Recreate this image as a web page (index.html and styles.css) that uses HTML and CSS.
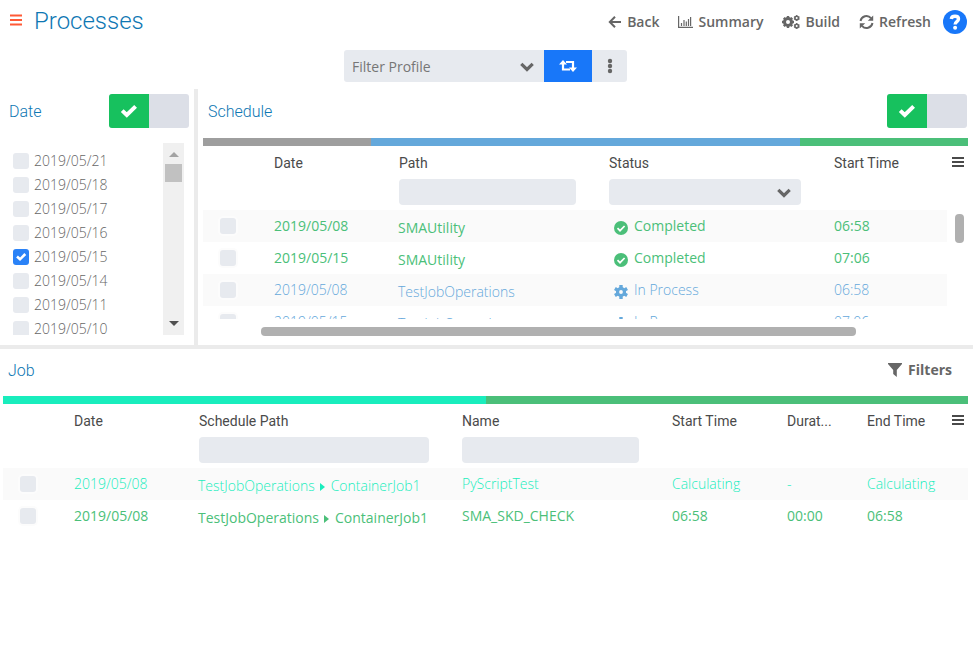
FILE: index.html
```html
<!DOCTYPE html>
<html lang="en">
<head>
<meta charset="utf-8">
<title>Processes</title>
<link rel="stylesheet" href="styles.css">
</head>
<body>
<svg class="sprite" aria-hidden="true">
  <symbol id="check" viewBox="0 0 18 14"><path d="M2.2 6.6 6.8 11 15.6 2.4" fill="none" stroke="currentColor" stroke-width="4"/></symbol>
  <symbol id="bars" viewBox="0 0 12 12"><path d="M0 2h12M0 6h12M0 10h12" stroke="currentColor" stroke-width="2"/></symbol>
  <symbol id="chevron" viewBox="0 0 14 10"><path d="M1.3 1.8 7 7.4l5.7-5.6" fill="none" stroke="currentColor" stroke-width="3.2"/></symbol>
  <symbol id="done" viewBox="0 0 14 14"><circle cx="7" cy="7" r="7" fill="currentColor"/><path d="M3.5 7.2 6 9.7l4.6-4.7" fill="none" stroke="#fff" stroke-width="1.7"/></symbol>
  <symbol id="gear" viewBox="0 0 14 14"><g stroke="currentColor" fill="none"><circle cx="7" cy="7" r="3.5" stroke-width="3.2"/><path d="M7 0v3M7 11v3M.9 3.5l2.7 1.6M10.4 8.9l2.7 1.6M.9 10.5l2.7-1.6M10.4 5.1l2.7-1.6" stroke-width="3.4"/></g></symbol>
</svg>

<header class="top">
  <div class="title-row">
    <button class="icon-btn nav" aria-label="Menu"><svg class="i12" viewBox="0 0 12 12"><path d="M0 1.500h12M0 6h12M0 10.500h12" stroke="currentColor" stroke-width="1.800"/></svg></button>
    <h1>Processes</h1>
    <nav class="actions">
      <a href="#back"><svg class="i14" viewBox="0 0 14 14"><path d="M13 7H2.5M7 1.8 1.8 7 7 12.2" fill="none" stroke="currentColor" stroke-width="2"/></svg>Back</a>
      <a href="#summary"><svg class="i15" viewBox="0 0 15 14"><path d="M.6 1v11.4H15" fill="none" stroke="currentColor" stroke-width="1.2"/><path d="M3.5 8v3M6 5v6M8.3 6.5V11M10.5 4v7M12.6 2v9" stroke="currentColor" stroke-width="1.2"/></svg>Summary</a>
      <a href="#build"><svg class="i18" viewBox="0 0 18 14"><g stroke="currentColor" fill="none"><circle cx="6" cy="7" r="3.5" stroke-width="3"/><path d="M6 1v2.4M6 10.6V13M0 7h2.4M9.6 7H12M1.8 2.8l1.6 1.6M8.6 9.6l1.6 1.6M1.8 11.2l1.6-1.6M8.6 4.4l1.6-1.6" stroke-width="2.4"/><circle cx="14.7" cy="3" r="1.8" stroke-width="1.6"/><circle cx="14.7" cy="11" r="1.8" stroke-width="1.6"/><path d="M14.7 0v1M14.7 5v1M11.9 1.8l1 .5M16.600 3.800l1 .4M17.5 1.8l-1 .5M12.900 3.800l-1 .4M14.7 8v1M14.7 13v1M11.9 9.8l1 .5M16.600 11.800l1 .4M17.5 9.8l-1 .5M12.900 11.800l-1 .4" stroke-width="1.2"/></g></svg>Build</a>
      <a href="#refresh"><svg class="i15" viewBox="0 0 15 14"><path d="M1.5 6A6 6 0 0 1 12 3.2M13.5 8A6 6 0 0 1 3 10.8" fill="none" stroke="currentColor" stroke-width="1.9"/><path d="M14.2.4v5.4H8.8zM.8 13.6V8.2h5.4z" fill="currentColor"/></svg>Refresh</a>
      <button class="help" aria-label="Help"><svg class="i24" viewBox="0 0 24 24"><path d="M8.3 9C8.600 5.300 15.500 5.300 15.500 9c0 2.700-3.400 2.600-3.400 5.600" fill="none" stroke="#fff" stroke-width="3.400"/><circle cx="12.100" cy="17.700" r="2" fill="#fff"/></svg></button>
    </nav>
  </div>
  <div class="profile">
    <div class="select-wrap">
      <select class="field" aria-label="Filter Profile"><option>Filter Profile</option></select>
      <svg class="chev"><use href="#chevron"/></svg>
    </div>
    <button class="switch" aria-label="Switch profile"><svg class="i18" viewBox="0 0 18 12"><path d="M4 2v7.500h7M7 2h7v7" fill="none" stroke="currentColor" stroke-width="2.200"/><path d="M4 0 0 4.600h8zM14 12l-4-4.600h8z" fill="currentColor"/></svg></button>
    <button class="more" aria-label="More"><svg class="i14" viewBox="0 0 14 14"><circle cx="7" cy="2" r="2.200" fill="currentColor"/><circle cx="7" cy="7" r="2.200" fill="currentColor"/><circle cx="7" cy="12" r="2.200" fill="currentColor"/></svg></button>
  </div>
</header>

<main>
  <div class="upper">
    <section class="pane dates">
      <div class="pane-head"><h2>Date</h2><button class="toggle" role="switch" aria-checked="true" aria-label="All dates"><span><svg class="i18"><use href="#check"/></svg></span></button></div>
      <div class="list-row">
        <div class="list">
          <label><input type="checkbox">2019/05/21</label>
          <label><input type="checkbox">2019/05/18</label>
          <label><input type="checkbox">2019/05/17</label>
          <label><input type="checkbox">2019/05/16</label>
          <label><input type="checkbox" checked>2019/05/15</label>
          <label><input type="checkbox">2019/05/14</label>
          <label><input type="checkbox">2019/05/11</label>
          <label><input type="checkbox">2019/05/10</label>
        </div>
        <div class="scrollbar"><i class="up"></i><i class="thumb"></i><i class="down"></i></div>
      </div>
    </section>

    <section class="pane schedule">
      <div class="pane-head"><h2>Schedule</h2><button class="toggle" role="switch" aria-checked="true" aria-label="All schedules"><span><svg class="i18"><use href="#check"/></svg></span></button></div>
      <div class="bar"><i class="waiting"></i><i class="process"></i><i class="complete"></i></div>
      <div class="clip">
        <table>
          <colgroup><col class="c60"><col class="c125"><col class="c210"><col class="c225"><col><col class="c21"></colgroup>
          <thead>
            <tr><th></th><th>Date</th><th>Path</th><th>Status</th><th>Start Time</th><th class="menu"><button class="icon-btn" aria-label="Columns"><svg class="i12"><use href="#bars"/></svg></button></th></tr>
            <tr class="filters"><td></td><td></td><td><input class="field" type="text" aria-label="Path"></td><td><div class="select-wrap"><select class="field" aria-label="Status"><option></option></select><svg class="chev"><use href="#chevron"/></svg></div></td><td></td><td class="gutter"></td></tr>
          </thead>
          <tbody>
            <tr class="complete"><td class="pick"><input type="checkbox" aria-label="Select row"></td><td>2019/05/08</td><td class="path">SMAUtility</td><td><span class="status"><svg class="i14"><use href="#done"/></svg>Completed</span></td><td>06:58</td><td class="gutter"></td></tr>
            <tr class="complete"><td class="pick"><input type="checkbox" aria-label="Select row"></td><td>2019/05/15</td><td class="path">SMAUtility</td><td><span class="status"><svg class="i14"><use href="#done"/></svg>Completed</span></td><td>07:06</td><td class="gutter"></td></tr>
            <tr class="process"><td class="pick"><input type="checkbox" aria-label="Select row"></td><td>2019/05/08</td><td class="path">TestJobOperations</td><td><span class="status"><svg class="i14"><use href="#gear"/></svg>In Process</span></td><td>06:58</td><td class="gutter"></td></tr>
            <tr class="process"><td class="pick"><input type="checkbox" aria-label="Select row"></td><td>2019/05/15</td><td class="path">TestJobOperations</td><td><span class="status"><svg class="i14"><use href="#gear"/></svg>In Process</span></td><td>07:06</td><td class="gutter"></td></tr>
          </tbody>
        </table>
        <i class="v-thumb"></i>
      </div>
      <div class="h-scroll"><i></i></div>
    </section>
  </div>

  <section class="pane jobs">
    <div class="pane-head"><h2>Job</h2><button class="filter-btn"><svg class="i14" viewBox="0 0 14 14"><path d="M0 0h14v1L8.800 7v7L5.200 11V7L0 1z" fill="currentColor"/></svg>Filters</button></div>
    <div class="bar"><i class="calc"></i><i class="finished"></i></div>
    <table>
      <colgroup><col class="c60"><col class="c125"><col class="c263"><col class="c210"><col class="c115"><col class="c80"><col><col class="c21"></colgroup>
      <thead>
        <tr><th></th><th>Date</th><th>Schedule Path</th><th>Name</th><th>Start Time</th><th>Durat...</th><th>End Time</th><th class="menu"><button class="icon-btn" aria-label="Columns"><svg class="i12"><use href="#bars"/></svg></button></th></tr>
        <tr class="filters"><td></td><td></td><td><input class="field" type="text" aria-label="Schedule Path"></td><td><input class="field" type="text" aria-label="Name"></td><td></td><td></td><td></td><td></td></tr>
      </thead>
      <tbody>
        <tr class="calculating"><td class="pick"><input type="checkbox" aria-label="Select row"></td><td>2019/05/08</td><td class="path">TestJobOperations<i class="caret"></i>ContainerJob1</td><td>PyScriptTest</td><td>Calculating</td><td>-</td><td>Calculating</td><td></td></tr>
        <tr class="complete"><td class="pick"><input type="checkbox" aria-label="Select row"></td><td>2019/05/08</td><td class="path">TestJobOperations<i class="caret"></i>ContainerJob1</td><td>SMA_SKD_CHECK</td><td>06:58</td><td>00:00</td><td>06:58</td><td></td></tr>
      </tbody>
    </table>
  </section>
</main>
</body>
</html>
```
FILE: styles.css
```css
* { box-sizing: border-box; }
body {
  margin: 0;
  background: #fff;
  color: #666;
  font: 14px/20px "Open Sans", "Noto Sans", sans-serif;
}
button, input, select { font: inherit; color: inherit; margin: 0; padding: 0; border: 0; background: none; }
svg { display: block; flex: none; overflow: visible; }
.sprite { position: absolute; width: 0; height: 0; }
.i12 { width: 12px; height: 12px; }
.i14 { width: 14px; height: 14px; }
.i15 { width: 15px; height: 14px; }
.i18 { width: 18px; height: 14px; }
.i24 { width: 24px; height: 24px; }

.top { height: 89px; }
.title-row { display: flex; align-items: center; height: 44px; padding: 0 6px 0 10px; }
.nav { color: #ff5a36; padding-bottom: 4px; }
h1, h2, th { font-family: Roboto, sans-serif; }
h1 { margin: 0 auto 0 12px; padding-bottom: 2px; color: #0e77b3; font-size: 24px; line-height: 32px; font-weight: 300; }
h2 { margin: 0; padding-top: 2px; color: #0e77b3; font-size: 16px; font-weight: 300; }
.actions { display: flex; align-items: center; gap: 19px; }
.actions a { display: flex; align-items: center; gap: 5px; color: #666; font-weight: 600; text-decoration: none; }
.help { width: 24px; height: 24px; margin-left: -7px; border-radius: 50%; background: #1877f9; }

.title-row + .profile { margin-top: 6px; }
.profile { display: flex; width: 285px; height: 32px; margin: 0 auto; padding-right: 2px; }
.select-wrap { position: relative; flex: 1; }
.field { display: block; width: 100%; height: 26px; border-radius: 4px; background: #e7eaef; padding: 0 8px; }
select.field { appearance: none; }
.profile .field { height: 32px; padding-top: 2px; border-radius: 3px 0 0 3px; color: #767676; }
.chev { position: absolute; right: 10px; top: 50%; width: 14px; height: 10px; margin-top: -4px; pointer-events: none; }
.switch, .more { display: flex; align-items: center; justify-content: center; }
.switch { width: 48px; background: #1877f9; color: #fff; }
.more { width: 35px; border-radius: 0 3px 3px 0; background: #e7eaef; }

.upper { display: flex; height: 260px; border-bottom: 4px solid #ebebeb; }
.pane { padding: 0 5px; }
.dates { width: 198px; border-right: 4px solid #ebebeb; }
.schedule { flex: 1; min-width: 0; }
.pane-head { display: flex; align-items: center; justify-content: space-between; height: 44px; padding: 0 1px 0 5px; }
.dates .pane-head { padding: 0 0 0 4px; }
.toggle { display: flex; width: 80px; height: 34px; border-radius: 3px; overflow: hidden; background: #dcdfe7; color: #fff; }
.toggle span { display: flex; align-items: center; justify-content: center; width: 50%; height: 100%; background: #17c15e; }

.list-row { display: flex; height: 192px; margin: 10px 5px 0 8px; }
.list { flex: 1; padding-top: 6px; overflow: hidden; font-weight: 300; }
.list label { display: flex; align-items: center; gap: 5px; height: 24px; }
input[type="checkbox"] { appearance: none; display: block; width: 16px; height: 16px; border-radius: 3px; background: #e7eaef; }
input[type="checkbox"]:checked {
  background: #2a82f7 url("data:image/svg+xml,%3Csvg xmlns='http://www.w3.org/2000/svg' viewBox='0 0 16 16'%3E%3Cpath d='M4 7.500 7 10.300 12.300 5' fill='none' stroke='white' stroke-width='2.600'/%3E%3C/svg%3E");
}
.scrollbar { display: flex; flex-direction: column; align-items: center; width: 21px; padding: 9px 0; background: #f0f0f0; }
.up { border: 5px solid transparent; border-top: 0; border-bottom: 5px solid #a3a3a3; }
.thumb { width: 17px; height: 18px; margin: 7px 0 auto; background: #c1c1c1; }
.down { border: 5px solid transparent; border-bottom: 0; border-top: 5px solid #505050; }

.bar { display: flex; height: 8px; margin: 5px 0 0; }
.bar i { flex: 1; }
.bar .waiting { background: #9e9e9e; flex: 168; }
.bar .process { background: #64a8db; flex: 429; }
.bar .complete { background: #4bbf79; flex: 168; }
.bar .calc { background: #19edbd; }
.bar .finished { background: #4bbf79; }

.clip { position: relative; height: 173px; overflow: hidden; }
.v-thumb { position: absolute; right: 4px; top: 68px; width: 9px; height: 29px; border-radius: 4px; background: #b0b0b0; }
.h-scroll { padding: 8px 112px 0 58px; }
.h-scroll i { display: block; height: 9px; border-radius: 4px; background: #b0b0b0; }

table { width: 100%; table-layout: fixed; border-collapse: collapse; }
.c21 { width: 21px; }
.c60 { width: 60px; }
.c80 { width: 80px; }
.c115 { width: 115px; }
.c125 { width: 125px; }
.c210 { width: 210px; }
.c225 { width: 225px; }
.c263 { width: 263px; }
th { height: 32px; padding: 2px 0 0 11px; text-align: left; color: #4a4a4a; font-weight: 400; }
th.menu { padding: 2px 0 0 5px; }
td { height: 32px; padding: 0 0 0 11px; white-space: nowrap; }
.filters td { padding: 0 22px 4px 11px; }
tbody tr:nth-child(odd) td:not(.gutter) { background: #fafafa; }
td.pick { padding: 0 0 0 17px; }
.pick input { box-shadow: 0 0 0 2px #fcfcfc; }
td.path { padding: 4px 0 0 10px; }
.status { display: flex; align-items: center; gap: 6px; padding-left: 5px; }
.status svg { margin-top: 3px; }
tr.complete { color: #4bbf79; }
tr.process { color: #64a8db; font-weight: 300; }
tr.calculating { color: #19edbd; font-weight: 300; }
.caret { display: inline-block; margin: 0 6px 0 5px; border: 4px solid transparent; border-left: 5px solid; border-right: 0; }

.jobs { padding: 0 5px 0 3px; }
.jobs .pane-head { height: 42px; padding: 0 16px 0 5px; }
.filter-btn { display: flex; align-items: center; gap: 6px; font-weight: 700; }
```
